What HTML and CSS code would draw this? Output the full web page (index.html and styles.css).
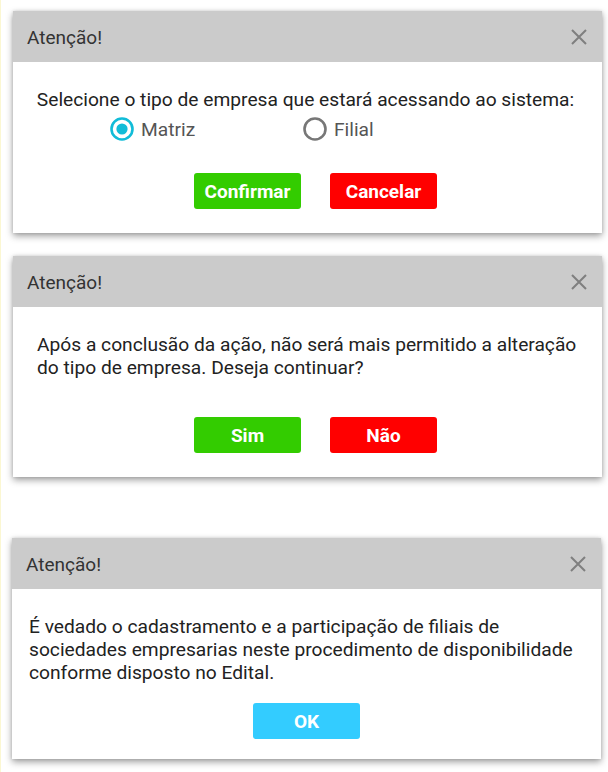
FILE: index.html
```html
<!DOCTYPE html>
<html lang="pt-BR">
<head>
<meta charset="utf-8">
<title>Atenção!</title>
<link rel="stylesheet" href="styles.css">
</head>
<body>
<main class="page">
  <section class="dialog dialog-first">
    <header class="dialog-header">
      <h2 class="dialog-title">Atenção!</h2>
      <svg class="close" width="16" height="16" viewBox="0 0 16 16" aria-label="Fechar"><path d="M1 1L15 15M15 1L1 15" stroke="#7f7f7f" stroke-width="2" fill="none"/></svg>
    </header>
    <div class="dialog-body body-select">
      <p class="msg msg-center">Selecione o tipo de empresa que estará acessando ao sistema:</p>
      <div class="radios">
        <label class="radio-opt">
          <svg class="radio" width="24" height="24" viewBox="0 0 24 24"><circle cx="12" cy="12" r="10.5" fill="none" stroke="#11bcd8" stroke-width="2.6"/><circle cx="12" cy="12" r="5.6" fill="#11bcd8"/></svg>
          <span>Matriz</span>
        </label>
        <label class="radio-opt">
          <svg class="radio" width="24" height="24" viewBox="0 0 24 24"><circle cx="12" cy="12" r="10.5" fill="none" stroke="#777" stroke-width="2.6"/></svg>
          <span>Filial</span>
        </label>
      </div>
      <div class="actions actions-pair">
        <button class="btn btn-green">Confirmar</button>
        <button class="btn btn-red">Cancelar</button>
      </div>
    </div>
  </section>

  <section class="dialog dialog-second">
    <header class="dialog-header">
      <h2 class="dialog-title">Atenção!</h2>
      <svg class="close" width="16" height="16" viewBox="0 0 16 16" aria-label="Fechar"><path d="M1 1L15 15M15 1L1 15" stroke="#7f7f7f" stroke-width="2" fill="none"/></svg>
    </header>
    <div class="dialog-body body-confirm">
      <p class="msg">Após a conclusão da ação, não será mais permitido a alteração<br>do tipo de empresa. Deseja continuar?</p>
      <div class="actions actions-pair actions-confirm">
        <button class="btn btn-green">Sim</button>
        <button class="btn btn-red">Não</button>
      </div>
    </div>
  </section>

  <section class="dialog dialog-third">
    <header class="dialog-header">
      <h2 class="dialog-title">Atenção!</h2>
      <svg class="close" width="16" height="16" viewBox="0 0 16 16" aria-label="Fechar"><path d="M1 1L15 15M15 1L1 15" stroke="#7f7f7f" stroke-width="2" fill="none"/></svg>
    </header>
    <div class="dialog-body body-info">
      <p class="msg">É vedado o cadastramento e a participação de filiais de<br>sociedades empresarias neste procedimento de disponibilidade<br>conforme disposto no Edital.</p>
      <div class="actions">
        <button class="btn btn-blue">OK</button>
      </div>
    </div>
  </section>
</main>
</body>
</html>
```
FILE: styles.css
```css
* { box-sizing: border-box; }
html, body { margin: 0; padding: 0; background: #fff; }
body {
  font-family: Roboto, "Noto Sans", Arial, sans-serif;
  border-left: 1px solid #fbf7d2;
  min-height: 772px;
}
.page {
  display: flex;
  flex-direction: column;
  padding: 11px 6px 0 12px;
}
.dialog {
  background: #fff;
  box-shadow: 0 3px 7px rgba(0,0,0,0.38), 0 0 3px rgba(0,0,0,0.12);
}
.dialog-second { margin-top: 23px; }
.dialog-third { margin-top: 61px; margin-left: -1px; margin-right: 1px; }
.dialog-header {
  height: 51px;
  padding: 2px 15px 0 14px;
  background: #cbcbcb;
  display: flex;
  align-items: center;
  justify-content: space-between;
}
.dialog-title {
  margin: 0;
  font-size: 19px;
  font-weight: 400;
  color: #333;
}
.close { display: block; margin-top: -2px; }
.dialog-body { padding: 26px 24px 24px; }
.body-select { padding-left: 22px; padding-right: 26px; }
.body-info { padding: 26px 17px 20px; }
.msg {
  margin: 0;
  font-size: 19.2px;
  line-height: 23px;
  color: #222;
  white-space: nowrap;
}
.msg-center { text-align: center; }
.radios {
  display: flex;
  margin-top: 6px;
  padding-left: 75px;
  height: 24px;
}
.radio-opt {
  display: flex;
  align-items: center;
  gap: 7px;
  width: 193px;
  font-size: 19.2px;
  color: #555;
}
.radio { display: block; }
.actions {
  display: flex;
  justify-content: center;
  gap: 29px;
  margin-top: 32px;
}
.body-select .actions-pair { padding-left: 20px; }
.actions-confirm { margin-top: 38px; padding-left: 16px; }
.body-info .actions { margin-top: 19px; }
.btn {
  width: 107px;
  height: 36px;
  border: 0;
  border-radius: 3px;
  font-family: Roboto, "Noto Sans", Arial, sans-serif;
  font-size: 19px;
  font-weight: 700;
  color: #fff;
  padding: 0;
}
.btn-green { background: #33cc00; }
.btn-red { background: #ff0000; }
.btn-blue { background: #33ccff; }
```
